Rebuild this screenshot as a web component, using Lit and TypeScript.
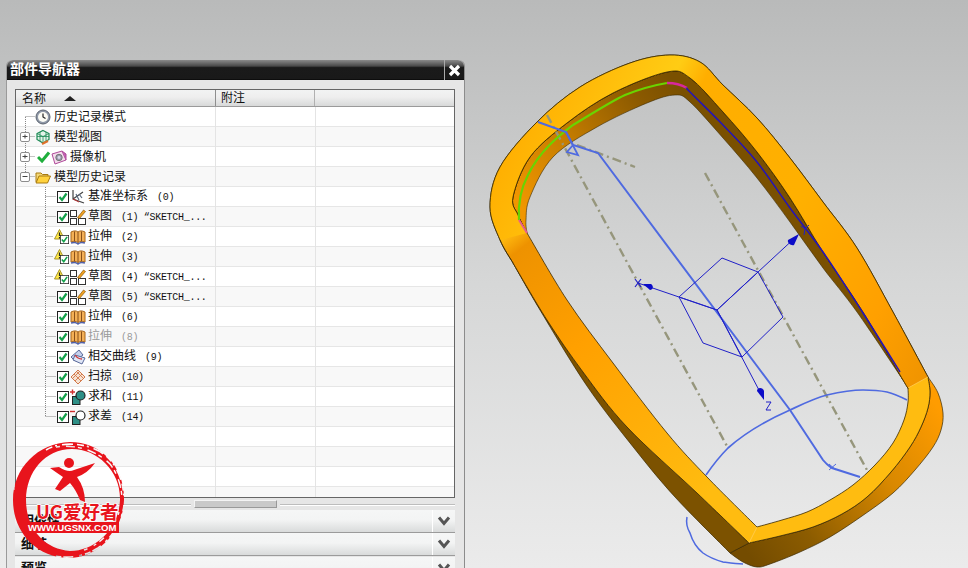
import {LitElement, html, svg, css} from 'lit';
import {customElement} from 'lit/decorators.js';

type Row = {
    icon: string;
    name: string;
    extra?: string;
    level: number;
    state?: string;   // check | warn | tick
    toggle?: string;  // plus | minus
    dim?: boolean;
    last?: boolean;
    first?: boolean;
};

const ROWS: Row[] = [
    {icon: 'clock', name: '历史记录模式', level: 0, first: true},
    {icon: 'views', name: '模型视图', level: 0, toggle: 'plus'},
    {icon: 'camera', name: '摄像机', level: 0, toggle: 'plus', state: 'tick'},
    {icon: 'folder', name: '模型历史记录', level: 0, toggle: 'minus', last: true},
    {icon: 'csys', name: '基准坐标系', extra: '(0)', level: 1, state: 'check'},
    {icon: 'sketch', name: '草图', extra: '(1) “SKETCH_...', level: 1, state: 'check'},
    {icon: 'extrude', name: '拉伸', extra: '(2)', level: 1, state: 'warn'},
    {icon: 'extrude', name: '拉伸', extra: '(3)', level: 1, state: 'warn'},
    {icon: 'sketch', name: '草图', extra: '(4) “SKETCH_...', level: 1, state: 'warn'},
    {icon: 'sketch', name: '草图', extra: '(5) “SKETCH_...', level: 1, state: 'check'},
    {icon: 'extrude', name: '拉伸', extra: '(6)', level: 1, state: 'check'},
    {icon: 'extrude', name: '拉伸', extra: '(8)', level: 1, state: 'check', dim: true},
    {icon: 'intersect', name: '相交曲线', extra: '(9)', level: 1, state: 'check'},
    {icon: 'sweep', name: '扫掠', extra: '(10)', level: 1, state: 'check'},
    {icon: 'unite', name: '求和', extra: '(11)', level: 1, state: 'check'},
    {icon: 'subtract', name: '求差', extra: '(14)', level: 1, state: 'check', last: true},
];

const ICONS: Record<string, unknown> = {
    clock: svg`<circle cx="8" cy="8" r="7" fill="#8f98a8" stroke="#5c6470"/><circle cx="8" cy="8" r="5" fill="#fbfbf4"/>
        <path d="M8 4.5V8L10.5 9.5" fill="none" stroke="#222" stroke-width="1.2"/>`,
    views: svg`<path d="M8 1.5L14 4.5V10.5L8 14L2 10.5V4.5Z" fill="#e4f4ea" stroke="#1d8a55" stroke-width="1.2"/>
        <path d="M2 4.5L8 7.5L14 4.5M8 7.5V14M5 3V12M11 3V12M2 7.5L14 7.5" fill="none" stroke="#1d8a55" stroke-width=".8"/>
        <path d="M7 15L13 12" stroke="#e0702a" stroke-width="2"/>`,
    camera: svg`<path d="M1 5L11 2L15 11L4 15Z" fill="#f4dcec" stroke="#b04a9a"/>
        <path d="M11 2L15 5V11" fill="#c060b0" stroke="#b04a9a"/>
        <circle cx="8" cy="8.5" r="3.2" fill="#9a9aae" stroke="#777"/><circle cx="8" cy="8.5" r="1.4" fill="#d8d8e6"/>`,
    folder: svg`<path d="M1 13V4H6L7.5 5.5H13V7" fill="#f4d878" stroke="#a87a10"/>
        <path d="M1 14L4 7H15.5L12.5 14Z" fill="#ffd23e" stroke="#a87a10"/>`,
    csys: svg`<path d="M3 1V10L14 14M3 10L13 3" fill="none" stroke="#444" stroke-width="1.2"/>
        <path d="M6 5L9 11M9 5L12 9" stroke="#5a6a80" stroke-width="1.2"/><path d="M3 10L9 13" stroke="#c03030"/>`,
    sketch: svg`<g fill="#fff" stroke="#333"><rect x=".5" y="1.5" width="6" height="6"/><rect x=".5" y="9.5" width="6" height="6"/><rect x="8.5" y="9.5" width="7" height="6"/></g>
        <path d="M7.500 8.500L13.500 1L15.500 2.500L9.500 9.500Z" fill="#f0a020" stroke="#8a5a10" stroke-width=".7"/>`,
    extrude: svg`<path d="M1 3C4 1.5 6 1.5 8 3C10 1.5 12 1.5 15 3V13C12 12 10 12 8 13.5C6 12 4 12 1 13Z" fill="#f3b056" stroke="#a8661a"/>
        <path d="M4.5 2.5V12.5M8 3V13.5M11.5 2.5V12.5" stroke="#8a5018"/>
        <path d="M1 14C4 13 6 13 8 15C10 13 12 13 15 14" fill="none" stroke="#5060a8" stroke-width="1.4"/>`,
    intersect: svg`<path d="M1 8L9 1L13 6L5 12Z" fill="#c4d0ec" stroke="#5a6a9a"/>
        <path d="M5 6L15 9L12 15L3 11Z" fill="#dfe6f6" stroke="#5a6a9a"/>
        <path d="M5 6C7 9 9 10 12 10" fill="none" stroke="#d03a3a" stroke-width="1.3"/>`,
    sweep: svg`<path d="M1 8L8 1L15 8L8 15Z" fill="#f6e2d2" stroke="#d2794a"/>
        <path d="M4 5L11 12M6.500 2.500L13.500 9.500M2.500 9.500L9.500 2.500M5 12L12 5" stroke="#d2794a" stroke-width=".9"/>`,
    unite: svg`<path d="M0 3H5M2.500 .5V5.500" stroke="#d03030" stroke-width="1.4"/>
        <rect x="2.500" y="7.500" width="7.500" height="8" fill="#2e8f86" stroke="#222"/>
        <circle cx="10.500" cy="6.500" r="4.500" fill="#2e8f86" stroke="#222" stroke-width="1.200"/>`,
    subtract: svg`<path d="M0 2.500H5" stroke="#d03030" stroke-width="1.4"/>
        <rect x="2.500" y="7.500" width="7.500" height="8" fill="#2e8f86" stroke="#222"/>
        <circle cx="10.500" cy="6.500" r="4.500" fill="#fff" stroke="#222" stroke-width="1.200"/>`,
};

function icon(name: string) {
    return html`<svg class="icon" width="16" height="16" viewBox="0 0 16 16">${ICONS[name]}</svg>`;
}

// dotted tree guides plus the expand box, one cell per row
function guide(r: Row) {
    const w = r.level ? 40 : 19;
    let lines;
    if (r.level) {
        lines = svg`<path d="M29.500 0V${r.last ? 10 : 20}M29.500 9.500H${r.state == 'warn' ? 37 : 40}" />`;
    } else {
        const top = r.first ? 10 : 0;
        const bottom = r.last ? 10 : 20;
        lines = svg`<path d="M9.500 ${top}V${bottom}M9.500 9.500H19" />`;
    }
    const mark = r.toggle ? svg`<rect x="4.500" y="5.500" width="9" height="9" rx="1.500" fill="#fff" stroke="#8d8d8d"/>
        <path d="M6.500 9.500H11.500${r.toggle == 'plus' ? 'M9 7.500V11.500' : ''}" stroke="#444"/>` : '';
    return html`<svg class="guide" width=${w} height="20" viewBox="0 0 ${w} 20">
        <g fill="none" stroke="#888" stroke-dasharray="1 1">${lines}</g>${mark}</svg>`;
}

function checkBox(small = false) {
    const s = small ? 9 : 12;
    return html`<svg class=${small ? 'small-check' : ''} width=${s} height=${s} viewBox="0 0 12 12">
        <rect x=".5" y=".5" width="11" height="11" fill="#fff" stroke="#222"/>
        <path d="M2.500 6L5 9L9.500 2.500" fill="none" stroke="#12a04a" stroke-width="2.200"/></svg>`;
}

function stateIcon(r: Row) {
    if (r.state == 'tick') {
        return html`<span class="slot tick"><svg width="13" height="12" viewBox="0 0 13 12">
            <path d="M1 6L5 10L12 1.500" fill="none" stroke="#1fae3c" stroke-width="3"/></svg></span>`;
    }
    if (r.state == 'check') {
        return html`<span class="slot">${checkBox()}</span>`;
    }
    if (r.state == 'warn') {
        return html`<span class="slot warn">
            <svg class="tri" width="11" height="11" viewBox="0 0 11 11">
                <path d="M5.500 .5L10.500 10H.5Z" fill="#ffe94a" stroke="#a89428"/>
                <path d="M5.500 3.500V7M5.500 8V9.500" stroke="#222" stroke-width="1.200"/></svg>
            ${checkBox(true)}</span>`;
    }
    return '';
}

@customElement('nav-panel')
class NavPanel extends LitElement {
    static styles = css`
:host {
display: flex;
flex-direction: column;
width: 459px;
height: 508px;
box-sizing: border-box;
margin: 60px 0 0 6px;
background: #e6e6e6;
border-right: 1px solid #8c8c8c;
border-left: 1px solid #9a9a9a;
border-radius: 6px 6px 0 0;
font-family: "Noto Sans CJK SC", "Liberation Sans", sans-serif;
color: #111;
font-size: 12px;
}
.title {
display: flex;
align-items: center;
justify-content: space-between;
flex: none;
height: 20px;
border-radius: 6px 6px 0 0;
background: linear-gradient(#8a8a8a 0, #4a4a4a 30%, #1a1a1a 38%, #191919 95%, #000 100%);
color: #fff;
font-weight: bold;
font-size: 14px;
padding-left: 3px;
}
.title span {
padding-bottom: 3px;
line-height: 17px;
}
.close {
display: flex;
align-items: center;
justify-content: center;
width: 19px;
height: 20px;
border-left: 1px solid #aaa;
}
.body {
display: flex;
flex-direction: column;
flex: 1;
min-height: 0;
padding: 9px 9px 0 8px;
}
.tree {
flex: none;
height: 409px;
box-sizing: border-box;
border: 1px solid #666;
background: #fff;
overflow: hidden;
}
.head {
display: flex;
height: 16px;
background: linear-gradient(#f2f3f3 0, #eeeeee 45%, #d8d9d9 100%);
border-bottom: 1px solid #9a9a9a;
box-sizing: content-box;
line-height: 14px;
}
.head .c1 {
display: flex;
align-items: center;
gap: 15px;
width: 200px;
box-sizing: border-box;
padding-left: 6px;
border-right: 1px solid #8e8e8e;
}
.head .c2 {
width: 99px;
box-sizing: border-box;
padding-left: 5px;
border-right: 1px solid #b0b0b0;
}
.row {
display: flex;
height: 20px;
box-shadow: inset 0 -1px 0 #e6e6e6;
}
.row:nth-child(even) {
background: #f8f8f8;
}
.row:nth-child(odd) {
background: #fff;
}
.c1 {
display: flex;
align-items: center;
width: 200px;
box-sizing: border-box;
border-right: 1px solid #e4e4e4;
white-space: pre;
}
.c2 {
width: 100px;
box-sizing: border-box;
border-right: 1px solid #e4e4e4;
}
.guide, .icon {
flex: none;
}
.slot {
display: flex;
align-items: center;
justify-content: center;
flex: none;
width: 14px;
}
.tick {
width: 16px;
}
.warn {
position: relative;
height: 20px;
}
.tri {
position: absolute;
left: -2px;
top: 2px;
}
.small-check {
position: absolute;
left: 4px;
top: 8px;
}
.label {
margin-left: 3px;
line-height: 16px;
padding-bottom: 3px;
}
.level1 .label {
margin-left: 2px;
padding-bottom: 1px;
}
.dim {
color: #9a9a9a;
}
.num {
font-family: "Liberation Mono", monospace;
font-size: 10px;
letter-spacing: -0.3px;
margin-left: 9px;
}
.split {
display: flex;
align-items: center;
flex: none;
height: 12px;
gap: 3px;
}
.split i {
flex: 1;
height: 1px;
background: #bdbdbd;
box-shadow: 0 1px 0 #fff;
}
.split b {
width: 81px;
height: 6px;
background: #c9c9c9;
border: 1px solid #f4f4f4;
border-right-color: #999;
border-bottom-color: #999;
}
.section {
display: flex;
flex: none;
height: 23px;
box-sizing: border-box;
border-bottom: 1px solid #9b9b9b;
background: linear-gradient(#f5f6f6 0, #f3f4f4 45%, #d9dbdb 100%);
font-weight: bold;
font-size: 13px;
}
.section + .section + .section {
margin-top: 1px;
}
.section span {
flex: 1;
padding-left: 6px;
line-height: 20px;
}
.section div {
display: flex;
align-items: center;
justify-content: center;
width: 22px;
border-left: 1px solid #fff;
}
`;

    rowView(r: Row) {
	return html`<div class="row level${r.level}">
	    <div class="c1 ${r.dim ? 'dim' : ''}">
		${guide(r)}${stateIcon(r)}${icon(r.icon)}
		<span class="label">${r.name}${r.extra ? html`<span class="num">${r.extra}</span>` : ''}</span>
	    </div>
	    <div class="c2"></div>
	</div>`;
    }

    sectionView(name: string) {
	return html`<div class="section"><span>${name}</span><div>
	    <svg width="14" height="10" viewBox="0 0 14 10"><path d="M2 1.500L7 7.500L12 1.500" fill="none" stroke="#555" stroke-width="3"/></svg>
	</div></div>`;
    }

    render() {
	let empties = [];
	for (let i = 0; i < 4; i++) {
	    empties.push(html`<div class="row"><div class="c1"></div><div class="c2"></div></div>`);
	}
	return html`
	    <div class="title"><span>部件导航器</span><div class="close">
		<svg width="13" height="13" viewBox="0 0 13 13"><path d="M2 2L11 11M11 2L2 11" stroke="#fff" stroke-width="3.200"/></svg>
	    </div></div>
	    <div class="body">
		<div class="tree">
		    <div class="head">
			<div class="c1">名称 <svg width="12" height="5" viewBox="0 0 12 5"><path d="M6 0L12 5H0Z" fill="#222"/></svg></div>
			<div class="c2">附注</div>
		    </div>
		    <div>${ROWS.map((r) => this.rowView(r))}${empties}</div>
		</div>
		<div class="split"><i></i><b></b><i></i></div>
		${this.sectionView('相依性')}
		${this.sectionView('细节')}
		${this.sectionView('预览')}
	    </div>`;
    }
}

type Pt = [number, number];

// catmull-rom through the points, so the traced outlines stay smooth
function smooth(p: Pt[], move = true) {
    let d = move ? `M${p[0][0]} ${p[0][1]}` : `L${p[0][0]} ${p[0][1]}`;
    for (let i = 0; i < p.length - 1; i++) {
	const a = p[Math.max(i - 1, 0)], b = p[i], c = p[i + 1], e = p[Math.min(i + 2, p.length - 1)];
	d += `C${b[0] + (c[0] - a[0]) / 6} ${b[1] + (c[1] - a[1]) / 6} ${c[0] - (e[0] - b[0]) / 6} ${c[1] - (e[1] - b[1]) / 6} ${c[0]} ${c[1]}`;
    }
    return d;
}

const OUT_LEFT: Pt[] = [[749, 543], [697, 493], [627, 427], [583, 372], [547, 320], [513, 263]];
const OUT_ARC: Pt[] = [[513, 263], [500, 240], [490, 207], [500, 167], [537, 122], [580, 87], [630, 63], [670, 55], [700, 62], [723, 85], [757, 118], [790, 158], [823, 202], [857, 248], [893, 312], [928, 377]];
const OUT_LOW: Pt[] = [[928, 377], [930, 392], [928, 408], [921, 427], [910, 447], [891, 472], [867, 497], [842, 514], [813, 527], [780, 536], [749, 543]];
const IN_LEFT: Pt[] = [[757, 527], [707, 477], [667, 433], [613, 363], [567, 300], [527, 233]];
const IN_ARC: Pt[] = [[527, 233], [518, 215], [513, 197], [530, 157], [567, 123], [613, 93], [667, 72], [690, 78], [723, 112], [757, 152], [790, 198], [823, 252], [863, 312], [903, 380], [908, 388]];
const IN_LOW: Pt[] = [[908, 388], [908, 402], [904, 420], [893, 443], [875, 465], [853, 485], [830, 500], [807, 512], [782, 520], [757, 527]];
const WALL_LOW: Pt[] = [[903, 380], [857, 312], [823, 268], [790, 222], [757, 178], [723, 138], [690, 102], [675, 95], [647, 103], [597, 127], [553, 157], [530, 197], [526, 220], [527, 233]];
const SKIRT_R: Pt[] = [[928, 377], [938, 393], [943, 413], [941, 430], [933, 447], [915, 470], [893, 493], [862, 516], [830, 537], [800, 552], [770, 564], [757, 567], [743, 562], [730, 553]];
const SKIRT_L: Pt[] = [[730, 553], [675, 497], [634, 448], [587, 386], [540, 310], [513, 263]];

const FACE = smooth(OUT_LEFT) + smooth(OUT_ARC, false) + smooth(OUT_LOW, false) + 'Z'
    + smooth(IN_LEFT) + smooth(IN_ARC, false) + smooth(IN_LOW, false) + 'Z';
const ARC_FACE = smooth(OUT_ARC.slice(1)) + 'L908 388' + smooth(IN_ARC.slice().reverse(), false) + 'Z';
const WALL = smooth(IN_ARC.slice(0, 14)) + smooth(WALL_LOW, false) + 'Z';
const SKIRT = smooth(SKIRT_R) + 'L749 543' + smooth(OUT_LOW.slice().reverse(), false) + 'Z';
const SKIRT_LEFT = smooth(SKIRT_L) + smooth(OUT_LEFT.slice().reverse(), false) + 'Z';

@customElement('part-view')
class PartView extends LitElement {
    static styles = css`
:host {
position: absolute;
left: 0;
top: 0;
}
svg {
display: block;
}
`;
    render() {
	return html`<svg width="968" height="568" viewBox="0 0 968 568">
	    <defs>
		<linearGradient id="skirtR" gradientUnits="userSpaceOnUse" x1="745" y1="550" x2="940" y2="410">
		    <stop offset="0" stop-color="#744c00"/><stop offset=".25" stop-color="#8c5c00"/><stop offset=".65" stop-color="#d88800"/><stop offset="1" stop-color="#ff9c00"/>
		</linearGradient>
		<linearGradient id="wall" gradientUnits="userSpaceOnUse" x1="525" y1="210" x2="680" y2="90">
		    <stop offset="0" stop-color="#f09600"/><stop offset=".4" stop-color="#c47c00"/><stop offset=".8" stop-color="#8c5a00"/><stop offset="1" stop-color="#7a5000"/>
		</linearGradient>
		<linearGradient id="top" gradientUnits="userSpaceOnUse" x1="500" y1="240" x2="700" y2="500">
		    <stop offset="0" stop-color="#ffbb10"/><stop offset=".06" stop-color="#ee9200"/><stop offset=".4" stop-color="#ffa000"/><stop offset="1" stop-color="#ffbc10"/>
		</linearGradient>
		<linearGradient id="arc" gradientUnits="userSpaceOnUse" x1="500" y1="150" x2="930" y2="370">
		    <stop offset="0" stop-color="#ffae00"/><stop offset=".25" stop-color="#ffcc14"/><stop offset=".31" stop-color="#ffae00"/><stop offset=".6" stop-color="#ffb000"/><stop offset=".85" stop-color="#ffa000"/><stop offset="1" stop-color="#f09400"/>
		</linearGradient>
	    </defs>
	    <path d=${SKIRT} fill="url(#skirtR)" stroke="#3a2800" stroke-width=".7"/>
	    <path d=${SKIRT_LEFT} fill="#7c5200" stroke="#3a2800" stroke-width=".7"/>
	    <path d=${WALL} fill="url(#wall)" stroke="#3a2800" stroke-width=".6"/>
	    <path d=${FACE} fill="url(#top)" fill-rule="evenodd" stroke="#3a2800" stroke-width=".8"/>
	    <path d=${ARC_FACE} fill="url(#arc)"/>
	    <path d=${smooth(OUT_ARC)} fill="none" stroke="#3a2800" stroke-width=".8"/>
	    <path d=${smooth(IN_ARC)} fill="none" stroke="#3a2800" stroke-width=".8"/>
	    <path d="M908 388L928 377" stroke="#ffd060" stroke-width=".7"/>
	    <path d="M749 543L757 527" stroke="#ffd060" stroke-width=".7"/>

	    <g fill="none" stroke="#96967c" stroke-width="2.400" stroke-dasharray="9 4 2 4">
		<path d="M547 115L728 448"/>
		<path d="M705 173L867 470"/>
		<path d="M577 145L635 167"/>
	    </g>

	    <path d="M519 220C518 205 520 190 528 175C540 150 560 135 573 125C595 112 610 102 625 95C640 89 655 85 667 83" fill="none" stroke="#6ad400" stroke-width="2.200"/>
	    <path d="M667 83C675 83 682 85 687 88" fill="none" stroke="#d8289c" stroke-width="2.400"/>
	    <path d="M519 220L527 233" stroke="#e8608c" stroke-width="2"/>
	    <path d=${smooth([[687, 88], [690, 92], [723, 125], [757, 162], [790, 208], [823, 252], [863, 313], [900, 372]])} fill="none" stroke="#2414b8" stroke-width="1.500"/>

	    <g fill="none" stroke="#4f6ae0">
		<path d="M538 122L566 132L573 145L598 153L760 370L790 410L823 460C827 465 829 466 832 468L860 477" stroke-width="2"/>
		<path d="M566 132L578 155L567 152L573 145" stroke-width="1.800"/>
		<path d="M706 475C715 462 722 454 728 448C745 433 765 421 790 410C805 403 815 398 827 395C840 392 850 390 863 390C875 390 882 391 887 392C895 394 901 397 907 400" stroke-width="1.700"/>
		<path d="M687 517C686 522 687 528 690 533C693 543 698 549 703 553C710 558 716 560 723 562C730 563 736 564 743 564" stroke-width="1.500"/>
		<path d="M829 464L836 470M836 464L829 470" stroke-width="1"/>
	    </g>

	    <g fill="none" stroke="#2020c8" stroke-width="1">
		<path d="M722 258L758 272L783 317L742 357L703 343L679 297Z"/>
		<path d="M717 310L758 272M717 310L679 297M717 310L742 357"/>
		<path d="M717 310L638 283M717 310L798 235M717 310L760 392"/>
		<path d="M635 279L641 287M641 279L635 287" stroke-width="1.200"/>
		<path d="M801 226L805 229L809 225M805 229L804 235"/>
		<path d="M766 402H771L766 410H771"/>
	    </g>
	    <path d="M643 284L651 284C654 286 653 290 650 290Z" fill="#0c0cc8"/>
	    <path d="M799 234L794 245C791 246 787 243 788 240Z" fill="#0c0cc8"/>
	    <path d="M764 400L757 391C757 387 763 387 764 391Z" fill="#0c0cc8"/>
	</svg>`;
    }
}

@customElement('ug-stamp')
class UgStamp extends LitElement {
    static styles = css`
:host {
position: absolute;
left: 10px;
top: 440px;
}
svg {
display: block;
}
.brand {
font-family: "Noto Sans CJK SC", "Liberation Sans", sans-serif;
font-weight: bold;
font-size: 18.500px;
fill: #e8141c;
stroke: #fff;
stroke-width: 1.500px;
paint-order: stroke;
}
.site {
font-family: "Liberation Sans", sans-serif;
font-weight: bold;
font-size: 9.600px;
fill: #fff;
}
`;
    render() {
	return html`<svg width="120" height="122" viewBox="10 440 120 122">
	    <defs>
		<mask id="rough" maskUnits="userSpaceOnUse" x="10" y="440" width="120" height="122">
		    <rect x="10" y="440" width="120" height="122" fill="#fff"/>
		    <g fill="none" stroke="#000">
			<path d="M46 450C60 441 90 442 106 456C118 466 124 484 124 500" stroke-width="1.600" stroke-dasharray="7 3 2 5 11 4"/>
			<path d="M56 447C75 444 96 450 110 464C118 474 122 488 122 500" stroke-width="1.400" stroke-dasharray="4 6 9 3"/>
			<path d="M124 505C122 522 112 538 98 548C85 556 70 559 56 556" stroke-width="1.600" stroke-dasharray="6 3 3 6 10 2"/>
			<path d="M119 512C114 530 100 545 84 550" stroke-width="1.400" stroke-dasharray="3 7 6 4"/>
			<path d="M14 490C14 480 20 465 32 455" stroke-width="1" stroke-dasharray="5 9"/>
		    </g>
		</mask>
	    </defs>
	    <path mask="url(#rough)" fill="#e8141c" fill-rule="evenodd" d="M70 442C100 442 125 466 124 500C123 530 100 558 68 558C36 557 13 532 13 500C13 468 38 443 70 442ZM72 449C45 449 26 472 26 500C26 528 44 549 70 551C96 551 119 528 120 500C121 472 98 449 72 449Z"/>
	    <circle cx="69" cy="463" r="5" fill="#e8141c"/>
	    <path fill="#e8141c" d="M50 468L59 467Q68 473 74 470L95 463Q88 473 77 477Q85 488 85 502L80 500Q76 490 70 483L60 491L55 489L63 477Q57 473 50 468Z"/>
	    <rect x="26" y="522" width="93" height="11" fill="#e8141c"/>
	    <text class="brand" x="36" y="519">UG爱好者</text>
	    <text class="site" x="28" y="531">WWW.UGSNX.COM</text>
	</svg>`;
    }
}

@customElement('app-root')
class AppRoot extends LitElement {
    static styles = css`
:host {
display: block;
position: relative;
width: 968px;
height: 568px;
overflow: hidden;
background: linear-gradient(#b9baba 0, #d6d7d7 50%, #ebebeb 100%);
}
.stage {
display: flow-root;
}
`;
    render() {
	return html`<part-view></part-view>
	    <div class="stage"><nav-panel></nav-panel></div>
	    <ug-stamp></ug-stamp>`;
    }
}
